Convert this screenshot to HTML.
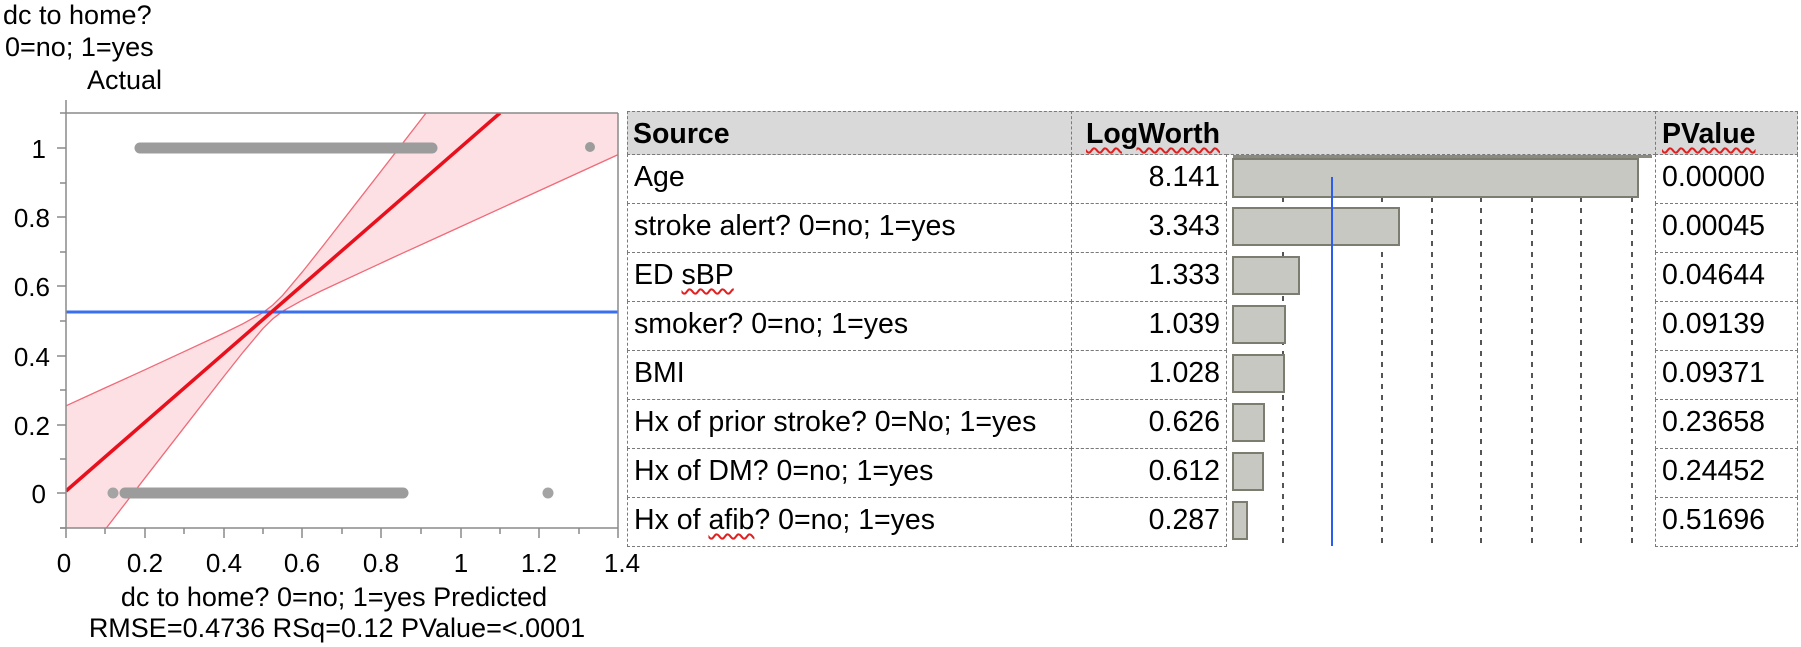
<!DOCTYPE html>
<html><head><meta charset="utf-8"><style>
body{margin:0;width:1801px;height:647px;background:#fff;position:relative;overflow:hidden;font-family:"Liberation Sans",Arial,sans-serif;color:#000}
.t{position:absolute;font-size:27px;white-space:nowrap;line-height:1}
.c{position:absolute;box-sizing:border-box;border:1px dashed #7a7a7a;font-size:28.5px;white-space:nowrap;line-height:1}
.h{background:#d9d9d9;font-weight:bold}
.sq{text-decoration:underline wavy #e02020;text-decoration-thickness:1.5px;text-underline-offset:4px}
</style></head><body>
<div class="t" style="left:3px;top:2px">dc to home?</div>
<div class="t" style="left:5px;top:34px">0=no; 1=yes</div>
<div class="t" style="left:87px;top:67px">Actual</div>

<svg width="1801" height="647" style="position:absolute;left:0;top:0">
<defs><clipPath id="cp"><rect x="66" y="113" width="552" height="415"/></clipPath></defs>
<g clip-path="url(#cp)">
<g transform="translate(66,493) scale(394,-345)">
<polygon fill="#fde0e4" stroke="none" points="0,0.2528 0.1,0.305 0.2,0.357 0.3,0.41 0.4,0.463 0.45,0.491 0.5,0.523 0.525,0.545 0.55,0.573 0.6,0.641 0.65,0.713 0.75,0.86 0.85,1.007 0.95,1.155 1.4,1.82 1.4,0.98 0.95,0.745 0.85,0.693 0.75,0.64 0.65,0.587 0.6,0.559 0.55,0.527 0.525,0.505 0.5,0.477 0.45,0.409 0.4,0.337 0.3,0.19 0.2,0.043 0.1,-0.105 0,-0.2528"/>
<polyline fill="none" stroke="#f06a78" stroke-width="1.3" vector-effect="non-scaling-stroke" points="0,0.2528 0.1,0.305 0.2,0.357 0.3,0.41 0.4,0.463 0.45,0.491 0.5,0.523 0.525,0.545 0.55,0.573 0.6,0.641 0.65,0.713 0.75,0.86 0.85,1.007 0.95,1.155 1.4,1.82"/>
<polyline fill="none" stroke="#f06a78" stroke-width="1.3" vector-effect="non-scaling-stroke" points="1.4,0.98 0.95,0.745 0.85,0.693 0.75,0.64 0.65,0.587 0.6,0.559 0.55,0.527 0.525,0.505 0.5,0.477 0.45,0.409 0.4,0.337 0.3,0.19 0.2,0.043 0.1,-0.105 0,-0.2528"/>
</g>
<line x1="66" y1="312" x2="618" y2="312" stroke="#3a6ff0" stroke-width="3"/>
<line x1="66" y1="491" x2="500" y2="113" stroke="#e8101c" stroke-width="3.5"/>
<line x1="140" y1="148" x2="432" y2="148" stroke="#9c9c9c" stroke-width="11" stroke-linecap="round"/>
<circle cx="590" cy="147" r="5" fill="#9c9c9c"/>
<line x1="125" y1="493" x2="403" y2="493" stroke="#9c9c9c" stroke-width="11" stroke-linecap="round"/>
<circle cx="113" cy="493" r="5.5" fill="#a4a4a4"/>
<circle cx="548" cy="493" r="5.5" fill="#a4a4a4"/>
</g>
<g stroke="#8a8a8a" stroke-width="1.5" fill="none">
<line x1="66" y1="113" x2="618" y2="113"/>
<line x1="618" y1="113" x2="618" y2="528"/>
<line x1="66" y1="100" x2="66" y2="528"/>
<line x1="60" y1="528" x2="618" y2="528"/>
<path d="M57 148h9M57 217h9M57 286h9M57 356h9M57 425h9M57 493h9M60 113h6M60 183h6M60 252h6M60 321h6M60 390h6M60 459h6M60 528h6"/>
<path d="M66 528v10M145 528v10M224 528v10M302 528v10M381 528v10M461 528v10M539 528v10M618 528v10M105 528v6M184 528v6M263 528v6M342 528v6M421 528v6M500 528v6M579 528v6"/>
</g>
<g font-family="Liberation Sans, Arial, sans-serif" font-size="26" text-anchor="end" fill="#000">
<text x="46" y="158">1</text><text x="50" y="227">0.8</text><text x="50" y="296">0.6</text><text x="50" y="366">0.4</text><text x="50" y="435">0.2</text><text x="46" y="503">0</text>
</g>
<g font-family="Liberation Sans, Arial, sans-serif" font-size="26" text-anchor="middle" fill="#000">
<text x="64" y="572">0</text><text x="145" y="572">0.2</text><text x="224" y="572">0.4</text><text x="302" y="572">0.6</text><text x="381" y="572">0.8</text><text x="461" y="572">1</text><text x="539" y="572">1.2</text><text x="622" y="572">1.4</text>
</g>
<g font-family="Liberation Sans, Arial, sans-serif" font-size="27" text-anchor="middle" fill="#000">
<text x="334" y="606">dc to home? 0=no; 1=yes Predicted</text>
<text x="337" y="637">RMSE=0.4736 RSq=0.12 PValue=&lt;.0001</text>
</g>
</svg>

<!-- header -->
<div class="c h" style="left:627px;top:111px;width:445px;height:44px;padding:8px 0 0 5px">Source</div>
<div class="c h" style="left:1071px;top:111px;width:156px;height:44px;padding:8px 6px 0 0;text-align:right"><span class="sq">LogWorth</span></div>
<div class="c h" style="left:1226px;top:111px;width:430px;height:44px;border-left:none;border-right:none"></div>
<div class="c h" style="left:1655px;top:111px;width:143px;height:44px;padding:8px 0 0 6px"><span class="sq">PValue</span></div>

<div class="c" style="left:627px;top:154px;width:445px;height:50px;padding:8px 0 0 6px">Age</div>
<div class="c" style="left:627px;top:203px;width:445px;height:50px;padding:8px 0 0 6px">stroke alert? 0=no; 1=yes</div>
<div class="c" style="left:627px;top:252px;width:445px;height:50px;padding:8px 0 0 6px">ED <span class="sq">sBP</span></div>
<div class="c" style="left:627px;top:301px;width:445px;height:50px;padding:8px 0 0 6px">smoker? 0=no; 1=yes</div>
<div class="c" style="left:627px;top:350px;width:445px;height:50px;padding:8px 0 0 6px">BMI</div>
<div class="c" style="left:627px;top:399px;width:445px;height:50px;padding:8px 0 0 6px">Hx of prior stroke? 0=No; 1=yes</div>
<div class="c" style="left:627px;top:448px;width:445px;height:50px;padding:8px 0 0 6px">Hx of DM? 0=no; 1=yes</div>
<div class="c" style="left:627px;top:497px;width:445px;height:50px;padding:8px 0 0 6px">Hx of <span class="sq">afib</span>? 0=no; 1=yes</div>

<div class="c" style="left:1071px;top:154px;width:156px;height:50px;padding:8px 6px 0 0;text-align:right">8.141</div>
<div class="c" style="left:1071px;top:203px;width:156px;height:50px;padding:8px 6px 0 0;text-align:right">3.343</div>
<div class="c" style="left:1071px;top:252px;width:156px;height:50px;padding:8px 6px 0 0;text-align:right">1.333</div>
<div class="c" style="left:1071px;top:301px;width:156px;height:50px;padding:8px 6px 0 0;text-align:right">1.039</div>
<div class="c" style="left:1071px;top:350px;width:156px;height:50px;padding:8px 6px 0 0;text-align:right">1.028</div>
<div class="c" style="left:1071px;top:399px;width:156px;height:50px;padding:8px 6px 0 0;text-align:right">0.626</div>
<div class="c" style="left:1071px;top:448px;width:156px;height:50px;padding:8px 6px 0 0;text-align:right">0.612</div>
<div class="c" style="left:1071px;top:497px;width:156px;height:50px;padding:8px 6px 0 0;text-align:right">0.287</div>

<div class="c" style="left:1655px;top:154px;width:143px;height:50px;padding:8px 0 0 6px">0.00000</div>
<div class="c" style="left:1655px;top:203px;width:143px;height:50px;padding:8px 0 0 6px">0.00045</div>
<div class="c" style="left:1655px;top:252px;width:143px;height:50px;padding:8px 0 0 6px">0.04644</div>
<div class="c" style="left:1655px;top:301px;width:143px;height:50px;padding:8px 0 0 6px">0.09139</div>
<div class="c" style="left:1655px;top:350px;width:143px;height:50px;padding:8px 0 0 6px">0.09371</div>
<div class="c" style="left:1655px;top:399px;width:143px;height:50px;padding:8px 0 0 6px">0.23658</div>
<div class="c" style="left:1655px;top:448px;width:143px;height:50px;padding:8px 0 0 6px">0.24452</div>
<div class="c" style="left:1655px;top:497px;width:143px;height:50px;padding:8px 0 0 6px">0.51696</div>

<svg width="1801" height="647" style="position:absolute;left:0;top:0">
<g stroke="#555" stroke-width="2" stroke-dasharray="5,6">
<line x1="1283" y1="197" x2="1283" y2="546"/>
<line x1="1382" y1="197" x2="1382" y2="546"/>
<line x1="1432" y1="197" x2="1432" y2="546"/>
<line x1="1481" y1="197" x2="1481" y2="546"/>
<line x1="1532" y1="197" x2="1532" y2="546"/>
<line x1="1581" y1="197" x2="1581" y2="546"/>
<line x1="1632" y1="197" x2="1632" y2="546"/>
</g>
<rect x="1233" y="155" width="419" height="3" fill="#8a8a7e"/>
<g fill="#c8c8c2" stroke="#7c7c70" stroke-width="2">
<rect x="1233" y="159" width="405" height="38"/>
<rect x="1233" y="208" width="166" height="37"/>
<rect x="1233" y="257" width="66" height="37"/>
<rect x="1233" y="306" width="52" height="37"/>
<rect x="1233" y="355" width="51" height="37"/>
<rect x="1233" y="404" width="31" height="37"/>
<rect x="1233" y="453" width="30" height="37"/>
<rect x="1233" y="502" width="14" height="37"/>
</g>
<line x1="1332" y1="177" x2="1332" y2="546" stroke="#2a5cf0" stroke-width="2"/>
</svg>
</body></html>
